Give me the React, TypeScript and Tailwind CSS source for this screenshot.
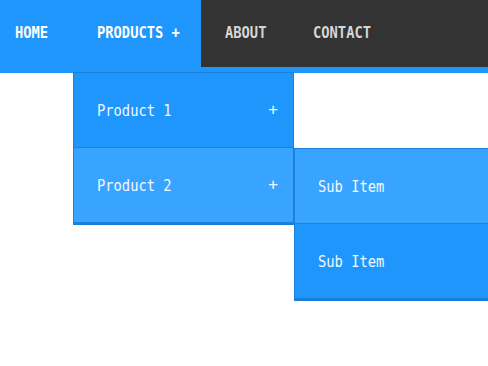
import React from 'react';

const blue = 'bg-[#1e96fc]';

function Label({ children, bold }: { children: React.ReactNode; bold?: boolean }) {
  return (
    <span
      className={`inline-block origin-left scale-x-[0.86] whitespace-nowrap text-[16px] leading-none ${
        bold ? 'font-bold' : ''
      }`}
    >
      {children}
    </span>
  );
}

function NavItem({ label, active, className }: { label: string; active?: boolean; className?: string }) {
  return (
    <li
      className={`flex h-[67px] items-center pb-[2px] ${
        active ? `${blue} text-white` : 'text-[#d6d6d6]'
      } ${className ?? ''}`}
    >
      <Label bold>{label}</Label>
    </li>
  );
}

function MenuRow({ label, plus, hover }: { label: string; plus?: boolean; hover?: boolean }) {
  return (
    <div
      className={`relative flex h-[75px] items-center border-b border-[#1a80dc] pl-[23px] pt-[2px] text-[#f4f8ff] ${
        hover ? 'bg-[#38a4ff]' : blue
      }`}
    >
      <Label>{label}</Label>
      {plus && <span className="absolute right-[15px] top-[29px] text-[16px] leading-none">+</span>}
    </div>
  );
}

export default function App() {
  return (
    <div
      className="relative h-[366px] w-[488px] overflow-hidden bg-white"
      style={{ fontFamily: '"DejaVu Sans Mono", "Liberation Mono", monospace' }}
    >
      <nav className="border-b-[6px] border-[#1e96fc] bg-[#333333]">
        <ul className="flex">
          <NavItem label="HOME" active className="w-[73px] pl-[15px]" />
          <li className="relative">
            <div className={`flex h-[67px] w-[128px] items-center pb-[2px] pl-6 text-white ${blue}`}>
              <Label bold>PRODUCTS +</Label>
            </div>
            <div className="absolute left-0 top-[72px] z-10 w-[221px] border-x border-t border-[#1a80dc] shadow-[0_2px_0_#1a7fd8]">
              <MenuRow label="Product 1" plus />
              <div className="relative">
                <MenuRow label="Product 2" plus hover />
                <div className="absolute left-[220px] top-0 w-[221px] border-x border-t border-[#1a80dc] shadow-[0_2px_0_#1a7fd8]">
                  <MenuRow label="Sub Item" hover />
                  <MenuRow label="Sub Item" />
                </div>
              </div>
            </div>
          </li>
          <NavItem label="ABOUT" className="w-[88px] pl-6" />
          <NavItem label="CONTACT" className="w-[90px] pl-6" />
        </ul>
      </nav>
    </div>
  );
}
